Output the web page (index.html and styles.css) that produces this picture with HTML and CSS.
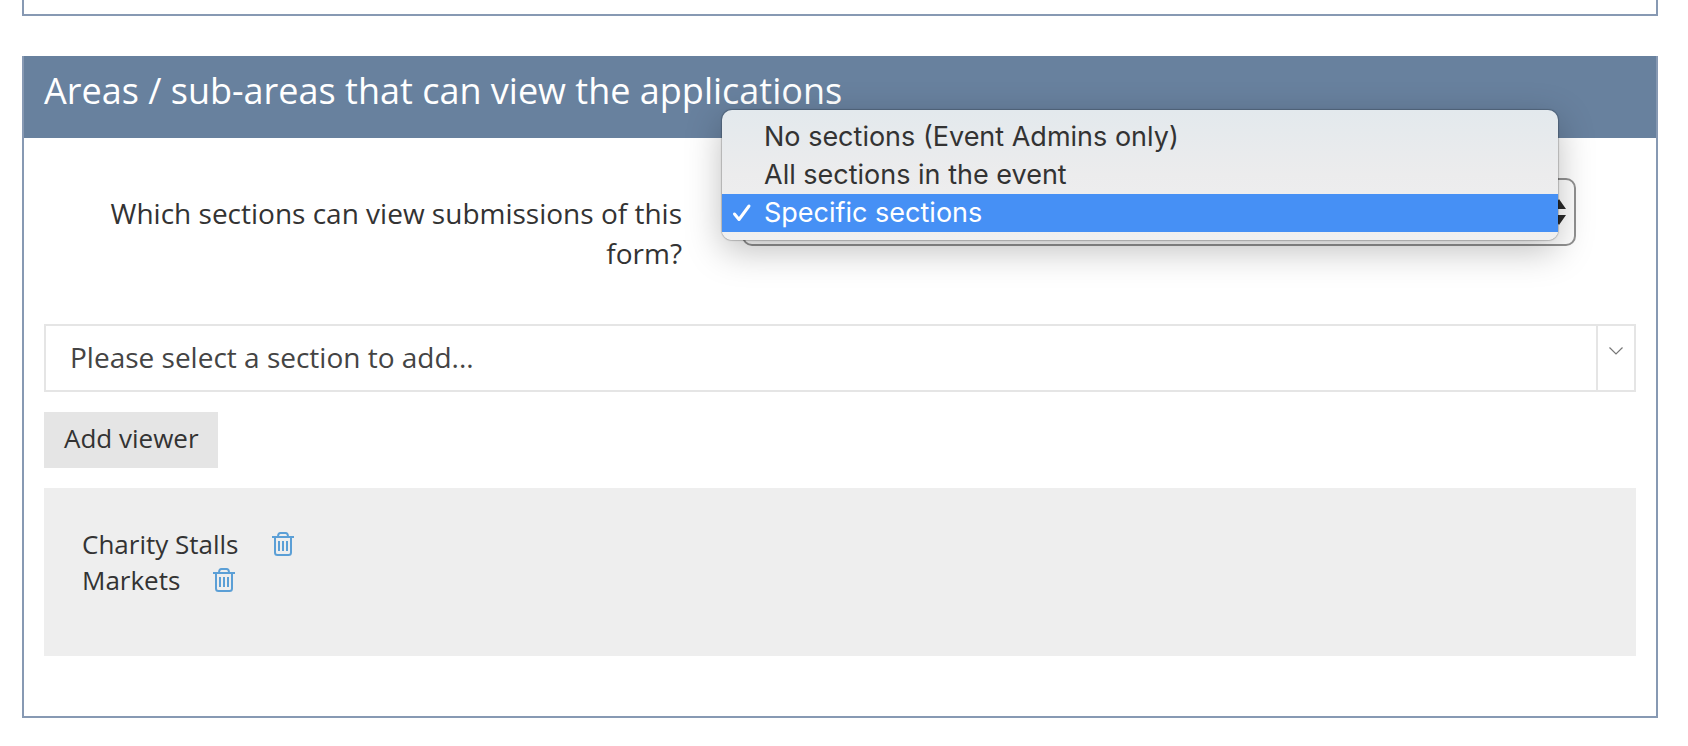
FILE: index.html
```
<!DOCTYPE html>
<html lang="en">
<head>
  <meta charset="utf-8">
  <title>Form settings</title>
  <link rel="stylesheet" href="styles.css">
</head>
<body>
  <div class="panel panel-previous"></div>

  <section class="panel">
    <h2 class="panel-title">Areas / sub-areas that can view the applications</h2>
    <div class="panel-body">
      <div class="form-row">
        <label class="form-label" for="visibility">Which sections can view submissions of this form?</label>
        <div class="form-control">
          <div class="select">
            <select id="visibility">
              <option>No sections (Event Admins only)</option>
              <option>All sections in the event</option>
              <option selected>Specific sections</option>
            </select>
            <svg class="select-arrows" width="14" height="26" viewBox="0 0 14 26" aria-hidden="true">
              <path d="M7 0l7 10H0zM7 26l7-10H0z" fill="#2b2b2b"/>
            </svg>
            <ul class="menu" role="listbox" aria-label="Visibility">
              <li class="menu-item" role="option">No sections (Event Admins only)</li>
              <li class="menu-item" role="option">All sections in the event</li>
              <li class="menu-item selected" role="option" aria-selected="true">
                <svg class="tick" width="20" height="20" viewBox="0 0 20 20" aria-hidden="true">
                  <path d="M2.500 11l4.500 5.500L17 3" fill="none" stroke="#fff" stroke-width="3" stroke-linecap="round" stroke-linejoin="round"/>
                </svg>
                Specific sections
              </li>
            </ul>
          </div>
        </div>
      </div>

      <div class="combo">
        <input class="combo-input" type="text" value="Please select a section to add..." aria-label="Section to add">
        <button class="combo-toggle" type="button" aria-label="Show sections">
          <svg width="14" height="8" viewBox="0 0 14 8" aria-hidden="true">
            <path d="M.5.5L7 7 13.500.5" fill="none" stroke="#777" stroke-width="1.200"/>
          </svg>
        </button>
      </div>

      <button class="add-button" type="button">Add viewer</button>

      <ul class="viewers">
        <li class="viewer">
          Charity Stalls
          <button class="remove" type="button" aria-label="Remove Charity Stalls">
            <svg width="22" height="24" viewBox="0 0 22 24" aria-hidden="true">
              <path d="M0 5h22M6 5c0-2.500 1-4 2.500-4h5C15 1 16 2.500 16 5M3 5v15.500a2.500 2.500 0 0 0 2.500 2.500h11a2.500 2.500 0 0 0 2.500-2.500V5"/>
              <path d="M7 9v10M11 9v10M15 9v10"/>
            </svg>
          </button>
        </li>
        <li class="viewer">
          Markets
          <button class="remove" type="button" aria-label="Remove Markets">
            <svg width="22" height="24" viewBox="0 0 22 24" aria-hidden="true">
              <path d="M0 5h22M6 5c0-2.500 1-4 2.500-4h5C15 1 16 2.500 16 5M3 5v15.500a2.500 2.500 0 0 0 2.500 2.500h11a2.500 2.500 0 0 0 2.500-2.500V5"/>
              <path d="M7 9v10M11 9v10M15 9v10"/>
            </svg>
          </button>
        </li>
      </ul>
    </div>
  </section>
</body>
</html>
```
FILE: styles.css
```
* {
  box-sizing: border-box;
}
body {
  margin: 0;
  padding: 0 30px 28px 22px;
  background: #fff;
  color: #333;
  font-family: "Open Sans", sans-serif;
  font-size: 28px;
  line-height: 40px;
}
button, input, select {
  font: inherit;
  color: inherit;
  border-radius: 0;
}
ul {
  list-style: none;
  margin: 0;
  padding: 0;
}
.panel {
  border: 2px solid #8799b3;
  border-top: 0;
}
.panel-previous {
  height: 16px;
  margin-bottom: 40px;
}
.panel-title {
  margin: 0;
  padding: 10px 20px 22px;
  background: #68819e;
  color: #fff;
  font-size: 36px;
  font-weight: normal;
  line-height: 50px;
}
.panel-body {
  padding: 40px 20px 60px;
}

/* label and select */
.form-row {
  display: grid;
  grid-template-columns: 5fr 7fr;
  margin: 0 -20px 51px;
}
.form-label {
  padding: 15px 22px 0 60px;
  text-align: right;
}
.form-control {
  padding: 0 80px 0 38px;
}
.select {
  position: relative;
}
.select select {
  display: block;
  width: 100%;
  height: 68px;
  padding: 0 40px 0 20px;
  border: 2px solid #929292;
  border-radius: 10px;
  background: #fff;
  appearance: none;
}
.select-arrows {
  position: absolute;
  right: 10px;
  top: 21px;
}
.menu {
  position: absolute;
  top: -68px;
  left: -20px;
  right: 18px;
  padding: 8px 0;
  border-radius: 10px;
  background: linear-gradient(#e3e9ed, #ececed 50%, #f0f0f0);
  box-shadow: 0 0 1px 1px rgba(0, 0, 0, .2), 0 10px 36px rgba(0, 0, 0, .26);
  font-family: Inter, sans-serif;
  font-size: 27px;
  line-height: 38px;
}
.menu-item {
  position: relative;
  padding-left: 42px;
}
.menu-item.selected {
  background: #4690f5;
  color: #fff;
}
.tick {
  position: absolute;
  left: 10px;
  top: 9px;
}

/* section picker */
.combo {
  display: flex;
  height: 68px;
  margin-bottom: 20px;
  border: 2px solid #e5e5e5;
}
.combo-input {
  flex: 1;
  min-width: 0;
  padding: 0 24px 2px;
  border: 0;
  background: #fff;
  color: #444;
}
.combo-toggle {
  width: 38px;
  padding: 0 0 14px;
  border: 0;
  border-left: 2px solid #e5e5e5;
  background: #fff;
}
.combo-toggle svg {
  display: block;
  margin: 0 auto;
}
.add-button {
  display: block;
  height: 56px;
  margin-bottom: 20px;
  padding: 0 19px 4px 20px;
  border: 0;
  background: #e5e5e5;
  font-size: 26px;
}

/* chosen sections */
.viewers {
  padding: 38px 38px 58px;
  background: #eee;
  font-size: 26px;
  line-height: 36px;
}
.viewer {
  display: flex;
  align-items: center;
  gap: 33px;
}
.remove {
  padding: 0;
  border: 0;
  background: none;
}
.remove svg {
  display: block;
  fill: none;
  stroke: #5b9fd6;
  stroke-width: 2;
}
```
